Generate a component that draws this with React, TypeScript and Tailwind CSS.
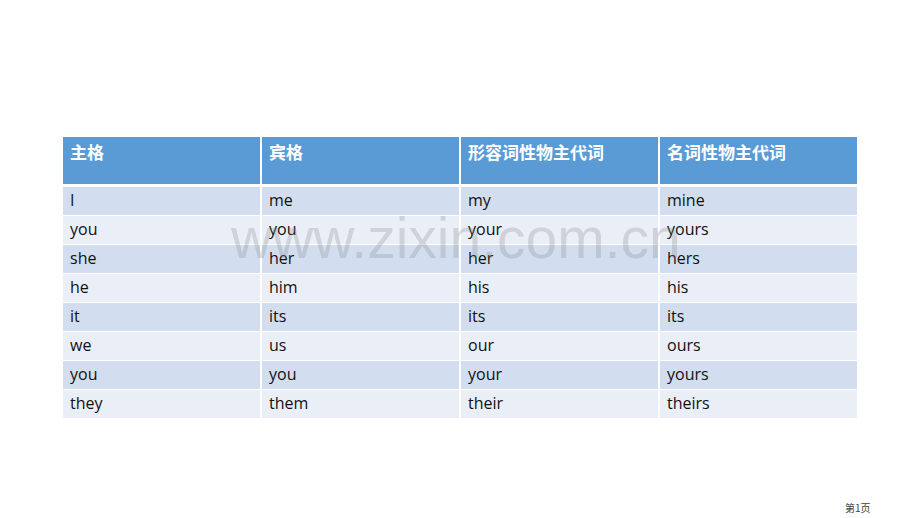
import React from "react";

const rows: string[][] = [
  ["I", "me", "my", "mine"],
  ["you", "you", "your", "yours"],
  ["she", "her", "her", "hers"],
  ["he", "him", "his", "his"],
  ["it", "its", "its", "its"],
  ["we", "us", "our", "ours"],
  ["you", "you", "your", "yours"],
  ["they", "them", "their", "theirs"],
];

const headers = ["主格", "宾格", "形容词性物主代词", "名词性物主代词"];

export default function App() {
  return (
    <div className="relative w-[920px] h-[518px] bg-white overflow-hidden font-['Open_Sans','Noto_Sans_CJK_SC',sans-serif]">
      <div className="pt-[137px] pl-[63px]">
        <div className="w-[794px] flex flex-col">
          {/* header */}
          <div className="grid grid-cols-4 gap-x-[2px] mb-[3px]">
            {headers.map((h) => (
              <div
                key={h}
                className="h-[47px] bg-[#5b9bd5] pl-[7px] pt-[4px] text-white font-bold text-[17px] leading-[22px] font-['Noto_Sans_CJK_SC',sans-serif]"
              >
                {h}
              </div>
            ))}
          </div>

          {/* body */}
          <div className="flex flex-col gap-y-[1px]">
            {rows.map((r, i) => (
              <div key={i} className="grid grid-cols-4 gap-x-[2px]">
                {r.map((c, j) => (
                  <div
                    key={j}
                    className={
                      "h-[28px] flex items-center pl-[7px] pb-[2px] text-[16px] text-[#111] " +
                      (i % 2 === 0 ? "bg-[#d2deef]" : "bg-[#eaeff7]")
                    }
                  >
                    {c}
                  </div>
                ))}
              </div>
            ))}
          </div>
        </div>
      </div>

      {/* watermark */}
      <div className="absolute left-[231px] top-[205px] text-[57px] leading-[66px] text-[#808080]/25 font-['Liberation_Sans',sans-serif] pointer-events-none select-none">
        www.zixin.com.cn
      </div>

      {/* page number */}
      <div className="absolute left-[845px] top-[501px] text-[10px] leading-[14px] text-[#404040] font-['Noto_Sans_CJK_SC',sans-serif]">
        第1页
      </div>
    </div>
  );
}
